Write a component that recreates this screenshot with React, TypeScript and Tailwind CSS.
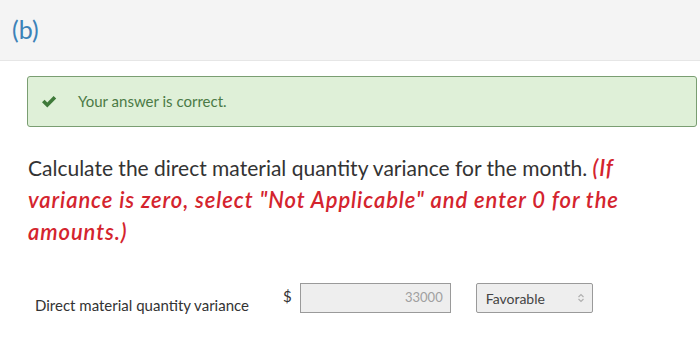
import React from 'react';

const App: React.FC = () => {
  return (
    <div className="w-[700px] h-[348px] bg-white overflow-hidden" style={{ fontFamily: 'Lato, "Noto Sans", sans-serif' }}>
      <div className="h-[61px] bg-[#f4f4f4] border-b border-[#e6e6e6] pl-[12px] pt-[13px]">
        <h2 className="text-[25px] leading-[32px] text-[#3c82b8]">(b)</h2>
      </div>

      <div className="pl-[27px] pr-[3px] pt-[15px]">
        <div className="h-[51px] flex items-center bg-[#dff0d8] border border-[#7a9e72] rounded-[3px] pl-[13px]">
          <svg className="w-[16px] h-[14px] text-[#3f7a3a]" viewBox="0 0 16 14" fill="currentColor">
            <path d="M1 7.2 L3.6 4.8 L6.3 7.4 L12.6 1 L15.2 3.5 L6.3 12.4 Z" />
          </svg>
          <span className="ml-[21px] text-[15px] text-[#4b7a46]">Your answer is correct.</span>
        </div>
      </div>

      <p className="mt-[25px] pl-[28px] pr-[60px] text-[21px] leading-[32px] text-[#333]">
        Calculate the direct material quantity variance for the month.{' '}
        <span className="italic font-semibold text-[22px] leading-[32px] tracking-[0.9px] text-[#d4242e]">
          (If variance is zero, select "Not Applicable" and enter 0 for the amounts.)
        </span>
      </p>

      <div className="mt-[35px] flex items-start">
        <span className="ml-[35px] mt-[11px] w-[240px] text-[15px] text-[#333]">Direct material quantity variance</span>
        <span className="ml-[8px] mt-[2px] text-[15px] text-[#333]">$</span>
        <div className="ml-[8px] w-[151px] h-[30px] bg-[#eeeeee] border border-[#9a9a9a] flex items-center justify-end pr-[7px] text-[13px] text-[#a0a0a0]">
          33000
        </div>
        <div className="ml-[25px] w-[117px] h-[30px] bg-[#eeeeee] border border-[#9a9a9a] rounded-[2px] flex items-center justify-between pl-[9px] pr-[7px] text-[14px] text-[#444]">
          <span>Favorable</span>
          <svg className="w-[8px] h-[10px]" viewBox="0 0 8 10" fill="none" stroke="#b0b0b0" strokeWidth="1.2">
            <path d="M1.5 4 L4 1.5 L6.5 4" />
            <path d="M1.5 6 L4 8.5 L6.5 6" />
          </svg>
        </div>
      </div>
    </div>
  );
};

export default App;
